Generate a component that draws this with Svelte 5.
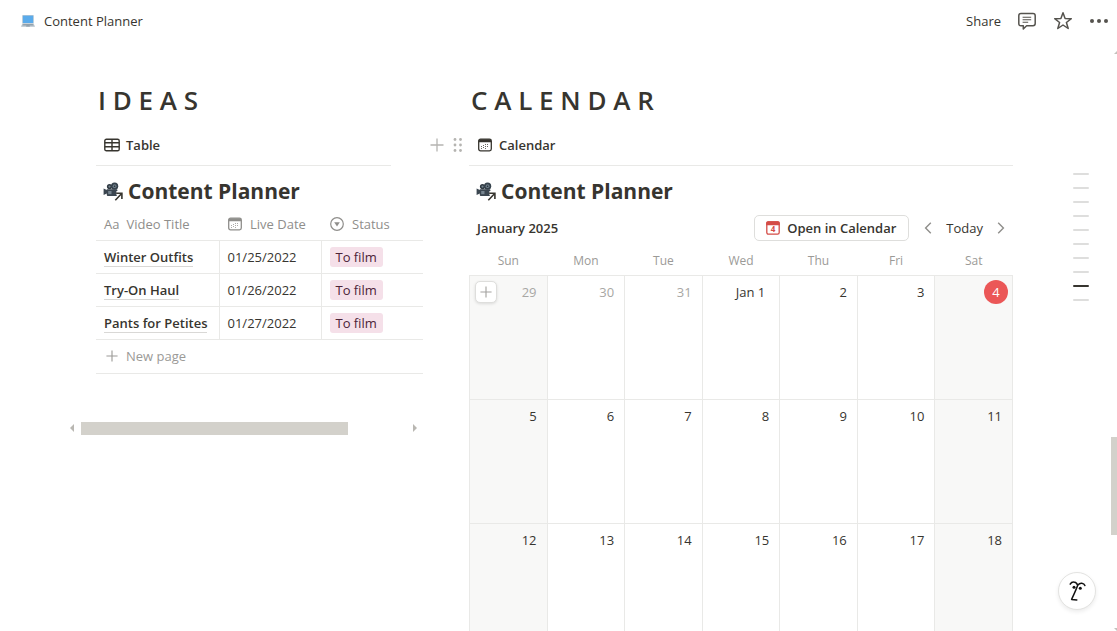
<script lang="ts">
	type Day = { label: string; muted?: boolean; today?: boolean; monthStart?: boolean };

	const ideas = [
		{ title: 'Winter Outfits', date: '01/25/2022', status: 'To film' },
		{ title: 'Try-On Haul', date: '01/26/2022', status: 'To film' },
		{ title: 'Pants for Petites', date: '01/27/2022', status: 'To film' }
	];

	const weekdays = ['Sun', 'Mon', 'Tue', 'Wed', 'Thu', 'Fri', 'Sat'];

	const weeks: Day[][] = [
		[
			{ label: '29', muted: true },
			{ label: '30', muted: true },
			{ label: '31', muted: true },
			{ label: 'Jan 1', monthStart: true },
			{ label: '2' },
			{ label: '3' },
			{ label: '4', today: true }
		],
		[5, 6, 7, 8, 9, 10, 11].map((n) => ({ label: String(n) })),
		[12, 13, 14, 15, 16, 17, 18].map((n) => ({ label: String(n) }))
	];

	// Page outline on the right edge; one mark per heading.
	const outline = Array.from({ length: 10 }, (_, i) => i);
	let current = $state(8);
</script>

{#snippet plus(size: number)}
	<svg width={size} height={size} viewBox="0 0 14 14" fill="none" stroke="currentColor" stroke-width="1.3" aria-hidden="true">
		<path d="M7 .5v13M.5 7h13" />
	</svg>
{/snippet}

{#snippet calendarIcon()}
	<svg width="16" height="16" viewBox="-1 -1 16 16" aria-hidden="true">
		<rect x=".7" y="1.2" width="12.6" height="11.6" rx="1.8" fill="none" stroke="currentColor" stroke-width="1.3" />
		<path d="M.7 4.2V3Q.7 1.2 2.5 1.2h9Q13.3 1.2 13.3 3v1.2z" fill="currentColor" />
		<path
			d="M7 6h1v1H7zM9 6h1v1H9zM5 7h1v1H5zM3 8h1v1H3zM5 9h1v1H5zM7 8h1v1H7zM9 8h1v1H9zM3 10h1v1H3zM7 10h1v1H7z"
			fill="currentColor"
			opacity=".75"
		/>
	</svg>
{/snippet}

{#snippet linkedTitle()}
	<h3 class="db-title">
		<svg width="20" height="20" viewBox="0 0 20 20" aria-hidden="true">
			<path d="M.6 7.4l3.2 1.6v-.8h9.6q1 0 1 1v4.7q0 1-1 1H4.8q-1 0-1-1v-1.5L.6 14z" fill="#3b4650" />
			<circle cx="6.5" cy="5.6" r="2.6" fill="#2f3941" />
			<circle cx="11.6" cy="5.2" r="3.6" fill="#36424c" />
			<circle cx="11.6" cy="5.2" r="1.9" fill="#6d7c88" />
			<circle cx="11.6" cy="5.2" r=".8" fill="#252d33" />
			<circle cx="6.5" cy="5.6" r="1.1" fill="#74838e" />
			<path d="M5.2 10h3.3v3.2H5.2z" fill="#778590" />
			<path d="M12.4 19l6.4-6.6M13.4 12h5.6v5.6" fill="none" stroke="#fff" stroke-width="4.2" />
			<path d="M12.3 19.2l6.4-6.7M13.2 12.3h5.7V18" fill="none" stroke="#37352f" stroke-width="1.6" />
		</svg>
		<a href="#planner">Content Planner</a>
	</h3>
{/snippet}

<div class="page">
	<header class="topbar">
		<a class="crumb" href="#page">
			<svg width="14" height="12" viewBox="0 0 14 12" aria-hidden="true">
				<rect x="1.2" y="0" width="11.6" height="8.6" rx=".8" fill="#b9c8d3" />
				<rect x="1.9" y=".7" width="10.2" height="7.3" fill="#5aabeb" />
				<path d="M1.4 8.6h11.2L14 11.8H0z" fill="#b5c1ca" />
				<path d="M2.3 9.2h9.4l.5 1H1.8zM5.4 10.6h3.2l.3.8H5.1z" fill="#8796a2" />
			</svg>
			<span>Content Planner</span>
		</a>
		<div class="actions">
			<button type="button">Share</button>
			<button type="button" aria-label="Comments">
				<svg width="20" height="20" viewBox="0 0 20 20" fill="none" stroke="#55534e" stroke-width="1.5" aria-hidden="true">
					<path d="M4 2.6h12q2.2 0 2.2 2.2v7.8q0 2.2-2.2 2.2H9.6L6.3 18v-3.2H4q-2.2 0-2.2-2.2V4.8Q1.8 2.6 4 2.6z" stroke-linejoin="round" />
					<path d="M5.6 6.2h8.6M5.6 8.7h8.6M5.6 11.2h5.6" stroke-width="1.1" />
				</svg>
			</button>
			<button type="button" aria-label="Favorite">
				<svg width="20" height="20" viewBox="0 0 20 20" fill="none" stroke="#55534e" stroke-width="1.5" stroke-linejoin="round" aria-hidden="true">
					<path d="M10 1.7l2.1 5.8 6.2.2-4.9 3.8 1.8 6L10 14l-5.2 3.5 1.8-6-4.9-3.8 6.2-.2z" />
				</svg>
			</button>
			<button type="button" aria-label="More">
				<svg width="20" height="20" viewBox="0 0 20 20" fill="#55534e" aria-hidden="true">
					<circle cx="3" cy="10" r="2" /><circle cx="10" cy="10" r="2" /><circle cx="17" cy="10" r="2" />
				</svg>
			</button>
		</div>
	</header>

	<main class="columns">
		<section>
			<h2>I D E A S</h2>
			<div class="tabs">
				<button type="button" class="tab">
					<svg width="16" height="14" viewBox="0 0 16 14" fill="none" stroke="currentColor" stroke-width="1.4" aria-hidden="true">
						<rect x=".8" y="1.2" width="14.4" height="11.6" rx="1.6" />
						<path d="M.8 4.8h14.4M.8 8.8h14.4M8 1.2v11.6" />
					</svg>
					Table
				</button>
			</div>
			{@render linkedTitle()}
			<div class="table-wrap">
				<table class="ideas">
					<thead>
						<tr>
							<th><span class="head"><span>Aa</span>Video Title</span></th>
							<th><span class="head">{@render calendarIcon()}Live Date</span></th>
							<th>
								<span class="head">
									<svg width="16" height="16" viewBox="-1 -1 16 16" aria-hidden="true">
										<circle cx="7" cy="7" r="6.3" fill="none" stroke="currentColor" stroke-width="1.2" />
										<path d="M4.2 5.2h5.6L7 9.6z" fill="currentColor" />
									</svg>
									Status
								</span>
							</th>
						</tr>
					</thead>
					<tbody>
						{#each ideas as idea (idea.title)}
							<tr>
								<td><a href="#idea">{idea.title}</a></td>
								<td>{idea.date}</td>
								<td><span class="tag">{idea.status}</span></td>
							</tr>
						{/each}
					</tbody>
				</table>
				<button type="button" class="new-page">{@render plus(12)}New page</button>
			</div>
			<div class="hscroll" aria-hidden="true">
				<svg width="4" height="8" viewBox="0 0 4 8"><path d="M4 0v8L0 4z" fill="currentColor" /></svg>
				<div class="htrack"><div class="hthumb"></div></div>
				<svg width="4" height="8" viewBox="0 0 4 8"><path d="M0 0v8l4-4z" fill="currentColor" /></svg>
			</div>
		</section>

		<section>
			<h2>C A L E N D A R</h2>
			<div class="tabs">
				<div class="handles">
					<button type="button" aria-label="Add block">{@render plus(14)}</button>
					<button type="button" aria-label="Drag block">
						<svg width="10" height="14" viewBox="0 0 10 14" fill="currentColor" aria-hidden="true">
							<circle cx="2" cy="1.5" r="1.4" /><circle cx="7.5" cy="1.5" r="1.4" />
							<circle cx="2" cy="7" r="1.4" /><circle cx="7.5" cy="7" r="1.4" />
							<circle cx="2" cy="12.5" r="1.4" /><circle cx="7.5" cy="12.5" r="1.4" />
						</svg>
					</button>
				</div>
				<button type="button" class="tab">{@render calendarIcon()}Calendar</button>
			</div>
			{@render linkedTitle()}
			<div class="toolbar">
				<strong>January 2025</strong>
				<button type="button" class="open">
					<svg width="16" height="16" viewBox="-1 -1 16 16" aria-hidden="true">
						<rect x=".8" y=".8" width="12.4" height="12.4" rx="1.6" fill="#fff" stroke="#d44c47" stroke-width="1.3" />
						<path d="M.2 4.2V2Q.2.2 2 .2h10q1.8 0 1.8 1.8v2.2z" fill="#d44c47" />
						<text x="7" y="11.4" text-anchor="middle">4</text>
					</svg>
					Open in Calendar
				</button>
				<div class="nav">
					<button type="button" aria-label="Previous month">
						<svg width="8" height="12" viewBox="0 0 8 12" fill="none" stroke="#8f8e8b" stroke-width="1.4" aria-hidden="true"><path d="M6.8.8L1.6 6l5.2 5.2" /></svg>
					</button>
					<button type="button">Today</button>
					<button type="button" aria-label="Next month">
						<svg width="8" height="12" viewBox="0 0 8 12" fill="none" stroke="#8f8e8b" stroke-width="1.4" aria-hidden="true"><path d="M1.2.8L6.4 6l-5.2 5.2" /></svg>
					</button>
				</div>
			</div>
			<table class="month">
				<thead>
					<tr>
						{#each weekdays as day (day)}
							<th>{day}</th>
						{/each}
					</tr>
				</thead>
				<tbody>
					{#each weeks as week, w}
						<tr>
							{#each week as day, d}
								<td class:weekend={d === 0 || d === 6} class:muted={day.muted}>
									<div class="day">
										{#if w === 0 && d === 0}
											<button type="button" class="add" aria-label="Add page">{@render plus(12)}</button>
										{/if}
										<span class="num" class:today={day.today} class:month-start={day.monthStart}>{day.label}</span>
									</div>
								</td>
							{/each}
						</tr>
					{/each}
				</tbody>
			</table>
		</section>
	</main>

	<nav class="outline" aria-label="Outline">
		{#each outline as i (i)}
			<button type="button" class:current={i === current} aria-label={`Section ${i + 1}`} onclick={() => (current = i)}></button>
		{/each}
	</nav>

	<div class="vthumb" aria-hidden="true"></div>
	<svg class="arrow up" width="3" height="3" viewBox="0 0 4 4" aria-hidden="true"><path d="M4 0v4H0z" /></svg>
	<svg class="arrow down" width="3" height="3" viewBox="0 0 4 4" aria-hidden="true"><path d="M0 0h4v4z" /></svg>

	<button type="button" class="ai" aria-label="Assistant">
		<svg width="20" height="22" viewBox="0 0 20 22" fill="none" stroke="#111" stroke-width="1.5" stroke-linecap="round" stroke-linejoin="round" aria-hidden="true">
			<path d="M3.2 4.2Q4.4 2 6.8 2.1q2.6 0 3.9 3.1M10.7 5.2Q12.6 2.9 14.8 3.2q2.4.3 3.1 2.4M10.7 5.2Q9.4 9 4.6 19.4l5.2.5" />
			<circle cx="7" cy="7.2" r="1.5" fill="#111" stroke="none" />
			<circle cx="13.3" cy="8.2" r="1.5" fill="#111" stroke="none" />
		</svg>
	</button>
</div>

<style>
	:global(body) {
		margin: 0;
		overflow: hidden;
	}
	.page {
		--text: #37352f;
		--muted: #9b9a97;
		--line: #e9e9e7;
		--thumb: #d3d1cb;
		position: relative;
		height: 100vh;
		overflow: hidden;
		background: #fff;
		color: var(--text);
		font-family: 'Open Sans', 'Noto Sans', sans-serif;
		font-size: 13px;
		line-height: 20px;
	}
	.page * {
		box-sizing: border-box;
	}
	button {
		display: flex;
		align-items: center;
		padding: 0;
		border: none;
		background: none;
		color: inherit;
		font: inherit;
		cursor: pointer;
	}
	a {
		color: inherit;
		text-decoration: none;
	}
	svg {
		display: block;
		flex-shrink: 0;
	}
	.topbar {
		display: flex;
		align-items: center;
		justify-content: space-between;
		height: 42px;
		padding: 0 8px 0 21px;
	}
	.crumb {
		display: flex;
		align-items: center;
		gap: 9px;
	}
	.actions {
		display: flex;
		align-items: center;
		gap: 16px;
	}
	.columns {
		display: grid;
		grid-template-columns: minmax(0, 295fr) minmax(0, 544fr);
		gap: 78px;
		padding: 42px 104px 0 96px;
	}
	h2 {
		margin: 0;
		padding: 0 2px;
		font-size: 26px;
		font-weight: 600;
		line-height: 32px;
		white-space: nowrap;
	}
	.tabs {
		position: relative;
		display: flex;
		align-items: center;
		height: 41px;
		margin-top: 9px;
		padding: 0 8px;
		border-bottom: 1px solid var(--line);
	}
	.tab {
		gap: 6px;
		font-weight: 600;
	}
	.handles {
		position: absolute;
		right: 100%;
		display: flex;
		align-items: center;
		gap: 9px;
		padding-right: 6px;
		color: #b5b4b1;
	}
	.db-title {
		display: flex;
		align-items: center;
		gap: 5px;
		height: 34px;
		margin: 8px 0 0;
		padding-left: 7px;
		font-size: 21px;
		font-weight: 700;
		white-space: nowrap;
	}
	.table-wrap {
		margin-right: -32px;
	}
	.ideas {
		width: 100%;
		border-collapse: collapse;
		table-layout: fixed;
	}
	.ideas th,
	.ideas td {
		height: 33px;
		padding: 0 8px;
		border-bottom: 1px solid var(--line);
		text-align: left;
		white-space: nowrap;
	}
	.ideas th {
		height: 32px;
		color: #8f8e8b;
		font-weight: 400;
	}
	.ideas th:first-child {
		width: 123px;
	}
	.ideas td + td {
		border-left: 1px solid var(--line);
	}
	.ideas td a {
		border-bottom: 1px solid #d9d8d6;
		font-weight: 600;
	}
	.head {
		display: flex;
		align-items: center;
		gap: 7px;
	}
	.tag {
		display: inline-block;
		padding: 0 6px;
		border-radius: 3px;
		background: #f5e0e9;
		color: #4c2337;
	}
	.new-page {
		gap: 8px;
		width: 100%;
		height: 34px;
		padding: 0 10px;
		border-bottom: 1px solid var(--line);
		color: var(--muted);
	}
	.hscroll {
		display: flex;
		align-items: center;
		gap: 7px;
		margin: 48px -26px 0;
		color: #b9b7b2;
	}
	.htrack {
		flex: 1;
	}
	.hthumb {
		width: 82%;
		height: 13px;
		background: var(--thumb);
	}
	.toolbar {
		display: flex;
		align-items: center;
		height: 26px;
		margin-top: 7px;
		padding: 0 8px;
	}
	.toolbar strong {
		flex: 1;
		font-weight: 600;
	}
	.open {
		gap: 6px;
		height: 26px;
		padding: 0 12px 0 10px;
		border: 1px solid #dededc;
		border-radius: 5px;
		font-weight: 600;
		white-space: nowrap;
	}
	.open text {
		fill: #d44c47;
		font-size: 8px;
		font-weight: 700;
	}
	.nav {
		display: flex;
		align-items: center;
		gap: 14px;
		margin-left: 15px;
	}
	.month {
		width: 100%;
		border-collapse: collapse;
		table-layout: fixed;
	}
	.month th {
		height: 34px;
		padding: 6px 0 0;
		color: var(--muted);
		font-size: 12px;
		font-weight: 400;
	}
	.month td {
		height: 124px;
		padding: 4px 4px 4px 5px;
		border: 1px solid var(--line);
		vertical-align: top;
	}
	.weekend {
		background: #f8f8f7;
	}
	.muted .num {
		color: #a8a7a4;
	}
	.day {
		display: flex;
		align-items: center;
		justify-content: space-between;
		height: 24px;
	}
	.num {
		margin-left: auto;
		padding-right: 6px;
	}
	.month-start {
		padding-right: 10px;
	}
	.today {
		width: 24px;
		padding: 0;
		border-radius: 50%;
		background: #eb5757;
		color: #fff;
		line-height: 24px;
		text-align: center;
	}
	.add {
		justify-content: center;
		width: 22px;
		height: 22px;
		border: 1px solid #dededc;
		border-radius: 5px;
		background: #fff;
		box-shadow: 0 1px 3px rgba(15, 15, 15, 0.12);
		color: #a3a29f;
	}
	.outline {
		position: absolute;
		top: 173px;
		right: 28px;
		display: grid;
		gap: 12px;
	}
	.outline button {
		width: 16px;
		height: 2px;
		border-radius: 1px;
		background: #dededd;
	}
	.outline .current {
		background: #37352f;
	}
	.vthumb {
		position: absolute;
		top: 437px;
		right: 0;
		width: 6px;
		height: 98px;
		background: var(--thumb);
	}
	.arrow {
		position: absolute;
		right: 0;
		fill: #c4c2bd;
	}
	.up {
		top: 51px;
	}
	.down {
		bottom: 0;
	}
	.ai {
		position: absolute;
		right: 21px;
		bottom: 21px;
		justify-content: center;
		width: 38px;
		height: 38px;
		border: 1px solid #e3e3e1;
		border-radius: 50%;
		background: #fff;
		box-shadow: 0 2px 4px rgba(15, 15, 15, 0.08);
	}
</style>
